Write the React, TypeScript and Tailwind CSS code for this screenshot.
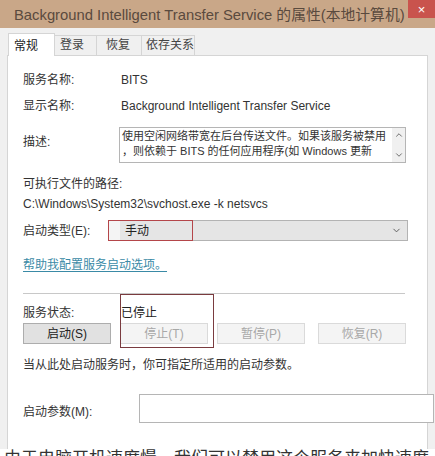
import { ChevronDown, ChevronUp } from "lucide-react";

const font = {
  fontFamily: '"Liberation Sans", "Noto Sans CJK SC", sans-serif',
};

export default function App() {
  const labelClass = "w-[98px] shrink-0";
  const btnOn =
    "w-[88px] h-[21px] flex items-center justify-center bg-[#e1e1e1] border border-[#adadad] text-[#222]";
  const btnOff =
    "w-[88px] h-[21px] flex items-center justify-center bg-[#f4f4f4] border border-[#dadada] text-[#a8a8a8]";

  return (
    <div
      className="w-[435px] h-[456px] overflow-hidden bg-[#f0f0f0] text-[12px] text-[#333] flex flex-col"
      style={font}
    >
      {/* title bar */}
      <div className="h-[28px] shrink-0 bg-[#c9a788] flex items-start">
        <div className="flex-1 pl-[14px] pt-[5px] text-[14.8px] leading-[20px] text-[#5a4a3e] whitespace-nowrap">
          Background Intelligent Transfer Service 的属性(本地计算机)
        </div>
        <div className="w-[27px] h-[18px] bg-[#c9534d] flex items-center justify-center text-white text-[13px] leading-none">
          ×
        </div>
      </div>

      {/* tabs */}
      <div className="h-[27px] shrink-0 flex items-end pl-[8px] pt-[5px]">
        <div className="w-[47px] h-[23px] bg-white border border-b-0 border-[#d5d5d5] pl-[5px] pt-[3px] text-[#222] z-10 -mb-px">
          常规
        </div>
        <div className="w-[42px] h-[20px] bg-[#f0f0f0] border border-l-0 border-b-0 border-[#d5d5d5] pl-[5px] leading-[19px] text-[#444]">
          登录
        </div>
        <div className="w-[45px] h-[20px] bg-[#f0f0f0] border border-l-0 border-b-0 border-[#d5d5d5] pl-[9px] leading-[19px] text-[#444]">
          恢复
        </div>
        <div className="w-[53px] h-[20px] bg-[#f0f0f0] border border-l-0 border-b-0 border-[#d5d5d5] pl-[4px] leading-[19px] text-[#444]">
          依存关系
        </div>
      </div>

      {/* panel */}
      <div className="flex-1 ml-[7px] w-[421px] bg-white border border-b-0 border-[#d5d5d5] pl-[15px] pt-[14px]">
        <div className="flex h-[20px] items-center">
          <div className={labelClass}>服务名称:</div>
          <div>BITS</div>
        </div>
        <div className="flex h-[20px] items-center mt-[6px]">
          <div className={labelClass}>显示名称:</div>
          <div className="whitespace-nowrap">Background Intelligent Transfer Service</div>
        </div>
        <div className="flex mt-[11px]">
          <div className="w-[96px] shrink-0 pt-[6px]">描述:</div>
          <div className="w-[287px] h-[36px] border border-[#b5b5b5] flex">
            <div className="flex-1 pl-[2px] pt-px text-[11px] leading-[15px] whitespace-nowrap overflow-hidden">
              <div>使用空闲网络带宽在后台传送文件。如果该服务被禁用</div>
              <div>，则依赖于 BITS 的任何应用程序(如 Windows 更新</div>
            </div>
            <div className="w-[13px] bg-[#f0f0f0] flex flex-col items-center justify-between py-[2px] text-[#555]">
              <ChevronUp size={10} strokeWidth={2} />
              <ChevronDown size={10} strokeWidth={2} />
            </div>
          </div>
        </div>
        <div className="h-[20px] flex items-center mt-[11px]">可执行文件的路径:</div>
        <div className="h-[19px] flex items-center whitespace-nowrap">
          C:\Windows\System32\svchost.exe -k netsvcs
        </div>
        <div className="flex items-center mt-[7px]">
          <div className="w-[85px] shrink-0">启动类型(E):</div>
          <div className="relative w-[300px] h-[21px] bg-[#e5e5e5] border border-[#b3b3b3] flex items-center">
            <div className="w-[11px] h-full bg-[#f4f4f4]" />
            <div className="pl-[5px] flex-1 text-[#222]">手动</div>
            <ChevronDown size={11} strokeWidth={2} className="mr-[5px] text-[#555]" />
            <div className="absolute -left-px -top-px w-[85px] h-[21px] border border-[#b4464a]" />
          </div>
        </div>
        <div className="h-[20px] flex items-center mt-[14px]">
          <span className="text-[#3a8aa6] underline underline-offset-2">
            帮助我配置服务启动选项。
          </span>
        </div>
        <div className="w-[382px] h-px bg-[#c8c8c8] mt-[18px]" />

        <div className="relative pt-[9px]">
          <div className="flex h-[20px] items-center">
            <div className={labelClass}>服务状态:</div>
            <div className="text-[#222]">已停止</div>
          </div>
          <div className="flex gap-[9px]">
            <div className={btnOn}>启动(S)</div>
            <div className={btnOff}>停止(T)</div>
            <div className={btnOff}>暂停(P)</div>
            <div className={btnOff + " ml-[4px]"}>恢复(R)</div>
          </div>
          <div className="absolute left-[97px] top-0 w-[94px] h-[54px] border border-[#7a3b3f]" />
        </div>

        <div className="h-[20px] flex items-center mt-[11px] whitespace-nowrap">
          当从此处启动服务时，你可指定所适用的启动参数。
        </div>
        <div className="flex items-center mt-[19px]">
          <div className="w-[116px] shrink-0 pt-[6px]">启动参数(M):</div>
          <div className="w-[295px] h-[29px] border border-[#b5b5b5] bg-white shrink-0" />
        </div>
      </div>

      {/* clipped caption below screenshot */}
      <div className="h-[7px] shrink-0 bg-white overflow-hidden">
        <div className="pl-[4px] text-[17px] leading-[20px] text-[#333] whitespace-nowrap">
          由于电脑开机速度慢，我们可以禁用这个服务来加快速度
        </div>
      </div>
    </div>
  );
}
